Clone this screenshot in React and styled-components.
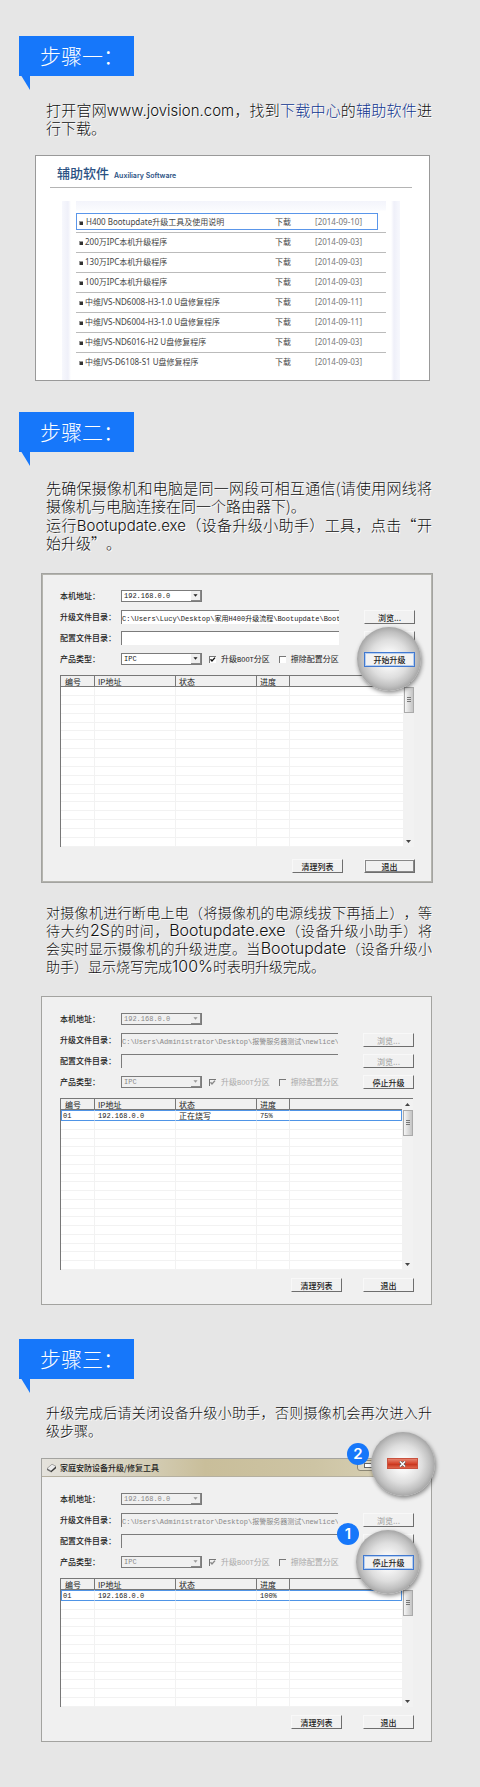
import React from "react";
import styled, { createGlobalStyle, css } from "styled-components";

const sans = `"Noto Sans CJK SC", "Noto Sans", sans-serif`;
const mono = `"Liberation Mono", "Noto Sans CJK SC", monospace`;

const Global = createGlobalStyle`
  * { box-sizing: border-box; }
  body { margin: 0; background: #e6e6e6; font-family: ${sans}; }
  button, input, select { font: inherit; color: inherit; margin: 0; padding: 0; border-radius: 0; }
`;

const Page = styled.main`
  padding: 36px 0 45px;
`;

const Step = styled.section`
  margin-bottom: ${(p) => p.$after || 0}px;
`;

const Tag = styled.h2`
  position: relative;
  width: 115px;
  height: 40px;
  margin: 0 0 24px 19px;
  padding-left: 21px;
  background: #1677fa;
  color: #fff;
  font-size: 21px;
  font-weight: 300;
  line-height: 38px;
  white-space: nowrap;
`;

const Tail = styled.svg`
  position: absolute;
  left: 0;
  top: 36px;
  width: 11px;
  height: 18px;
  fill: #1677fa;
`;

const Text = styled.div`
  margin: 0 48px ${(p) => p.$after}px 46px;
  padding-top: ${(p) => p.$before || 0}px;
  color: #111;
  font-size: ${(p) => p.$size || 15}px;
  font-weight: 300;
  line-height: 18px;
  text-align: justify;
  text-spacing-trim: space-all;
  text-shadow: 1px 1px 0 #fff;
  p { margin: 0; }
  p + p { margin-top: 1px; }
`;

const Latin = styled.span`
  font-family: Inter, sans-serif;
  font-size: ${(p) => p.$size || 15}px;
  line-height: 1;
`;

const Link = styled.a`
  color: #0f3590;
  text-decoration: none;
`;

/* ---------- download list ---------- */

const Card = styled.div`
  height: 226px;
  margin: 0 50px 0 35px;
  padding: 8px 17px 0 14px;
  background: #fff;
  border: 1px solid #999;
  display: flex;
  flex-direction: column;
`;

const CardHead = styled.header`
  display: flex;
  align-items: baseline;
  gap: 5px;
  height: 24px;
  padding-left: 7px;
  border-bottom: 1px solid #b4b4b4;
  color: #2b5183;
  h3 { margin: 0; font-size: 13px; font-weight: 500; line-height: 18px; }
  small { font: 600 7px/12px Inter, sans-serif; }
`;

const CardBody = styled.div`
  flex: 1;
  margin: 13px 12px 0;
  padding: 0 14px;
  background: linear-gradient(90deg, #f7f8fd, #eff0f9 6px, #fff 9px, #fff calc(100% - 9px), #eff0f9 calc(100% - 6px), #f7f8fd);
`;

const ListWrap = styled.div`
  position: relative;
  padding-top: 11px;
  background: linear-gradient(#f3f4fb, #fafbfe 9px, #fff 10px);
`;

const Files = styled.table`
  width: 100%;
  border-collapse: collapse;
  table-layout: fixed;
  color: #444;
  font: 8px/12px "Noto Sans", "Noto Sans CJK SC", sans-serif;
  td { height: 20px; padding: 0; border-bottom: 1px solid #bbb; white-space: nowrap; }
  tr:last-child td { border-bottom: 0; }
  td:nth-child(1) { padding-left: 3px; }
  td:nth-child(2) { width: 40px; }
  td:nth-child(3) { width: 71px; color: #777; }
`;

const Bullet = styled.i`
  display: inline-block;
  width: 4px;
  height: 4px;
  margin-right: ${(p) => (p.$wide ? 3 : 2)}px;
  background: #333;
  border-top: 1px solid #999;
  border-left: 1px solid #999;
`;

const RowFrame = styled.span`
  position: absolute;
  left: 0;
  right: 8px;
  top: 12px;
  height: 17px;
  border: 1px solid #5a96ea;
  pointer-events: none;
`;

const files = [
  ["H400 Bootupdate升级工具及使用说明", "10"],
  ["200万IPC本机升级程序", "03"],
  ["130万IPC本机升级程序", "03"],
  ["100万IPC本机升级程序", "03"],
  ["中维JVS-ND6008-H3-1.0 U盘修复程序", "11"],
  ["中维JVS-ND6004-H3-1.0 U盘修复程序", "11"],
  ["中维JVS-ND6016-H2 U盘修复程序", "03"],
  ["中维JVS-D6108-S1 U盘修复程序", "03"],
];

function Downloads() {
  return (
    <Card>
      <CardHead>
        <h3>辅助软件</h3>
        <small>Auxiliary Software</small>
      </CardHead>
      <CardBody>
        <ListWrap>
          <Files>
            <tbody>
              {files.map(([name, day], i) => (
                <tr key={name}>
                  <td><Bullet $wide={i === 0} />{name}</td>
                  <td>下载</td>
                  <td>[2014-09-{day}]</td>
                </tr>
              ))}
            </tbody>
          </Files>
          <RowFrame />
        </ListWrap>
      </CardBody>
    </Card>
  );
}

/* ---------- upgrade tool window ---------- */

const Window = styled.div`
  margin: 0 ${(p) => (p.$heavy ? 47 : 48)}px ${(p) => p.$after || 0}px 41px;
  background: #f0f0f0;
  border: 1px solid #a3a3a0;
  ${(p) => p.$heavy && css`box-shadow: inset 0 0 0 1px #b4b4ae;`}
  color: #222;
  font-size: 8px;
  line-height: 12px;
`;

const TitleBar = styled.header`
  position: relative;
  display: flex;
  align-items: center;
  gap: 3px;
  height: 18px;
  padding-left: 4px;
  background: linear-gradient(90deg, #e4e2dc, #d9d4c2 20%, #c9be9a 42%, #cdc4a4 70%, #ddd6bd);
  border-bottom: 1px solid #b5b0a0;
  font-weight: 500;
  white-space: nowrap;
`;

const Body = styled.div`
  padding: 15px 17px ${(p) => p.$bottom}px 18px;
`;

const Form = styled.form`
  display: flex;
  flex-direction: column;
  gap: 7px;
`;

const Row = styled.div`
  display: flex;
  align-items: center;
  height: 14px;
`;

const Label = styled.label`
  width: 61px;
  font-weight: 500;
  white-space: nowrap;
`;

const sunken = css`
  background: ${(p) => (p.disabled ? "#f0f0f0" : "#fff")};
  border: 0 solid #7b7b7b;
  border-width: 1px 0 0 1px;
  color: ${(p) => (p.disabled ? "#888" : "#222")};
  font-family: ${mono};
  font-size: 7px;
  opacity: 1;
`;

const Picker = styled.span`
  position: relative;
  display: block;
  width: 81px;
  height: 12px;
  select {
    ${sunken}
    appearance: none;
    display: block;
    width: 100%;
    height: 12px;
    padding-left: 2px;
    border-width: 1px;
    line-height: 10px;
    ${(p) => p.$off && css`background: #f0f0f0; color: #888;`}
  }
  svg {
    position: absolute;
    right: 1px;
    top: 1px;
    width: 10px;
    height: 10px;
    background: #efefef;
    border-right: 1px solid #888;
    border-bottom: 1px solid #888;
    fill: ${(p) => (p.$off ? "#999" : "#222")};
    pointer-events: none;
  }
`;

const PathBox = styled.input`
  ${sunken}
  flex: 1;
  min-width: 0;
  height: 14px;
  line-height: 12px;
`;

const Slot = styled.span`
  position: relative;
  flex: none;
  width: 51px;
  height: 14px;
  margin-left: ${(p) => (p.$push ? "auto" : "25px")};
`;

const Push = styled.button`
  display: block;
  width: 51px;
  height: 14px;
  background: #f1f1f1;
  border: 1px solid #f8f8f8;
  border-right-color: #6e6e6e;
  border-bottom-color: #6e6e6e;
  box-shadow: ${(p) => (p.$default ? "inset 1px 1px 0 #888, inset -1px -1px 0 #888" : "none")};
  font-weight: 500;
  line-height: 11px;
  white-space: nowrap;
  &:disabled { color: #aaa; }
  ${(p) => p.$framed && css`
    position: absolute;
    inset: 0 0 auto 0;
    z-index: 3;
    height: 15px;
    background: #f2f2f2;
    border: 1px solid #4179d0;
    box-shadow: inset 0 0 0 1px #b4cdf0;
  `}
`;

const Lens = styled.span`
  position: absolute;
  left: ${(p) => p.$left}px;
  top: ${(p) => p.$top}px;
  z-index: 2;
  width: 64px;
  height: 64px;
  border-radius: 50%;
  background: radial-gradient(closest-side, #fff 0, #f6f6f6 25%, #dedede 60%, #c0c0c0 85%, #a6a6a6 100%);
  box-shadow: 1px 2px 4px rgba(0, 0, 0, 0.45);
`;

const Badge = styled.span`
  position: absolute;
  left: ${(p) => p.$left}px;
  top: ${(p) => p.$top}px;
  z-index: 4;
  width: 22px;
  height: 22px;
  border-radius: 50%;
  background: #1677fa;
  color: #fff;
  font: 600 15px/22px Inter, sans-serif;
  text-align: center;
`;

const Check = styled.label`
  display: flex;
  align-items: center;
  gap: 5px;
  margin-left: ${(p) => p.$gap}px;
  color: ${(p) => (p.$off ? "#aaa" : "#222")};
  white-space: nowrap;
  code { font-family: ${mono}; font-size: 7px; }
`;

const CheckBox = styled.span`
  position: relative;
  display: flex;
  input {
    appearance: none;
    width: 7px;
    height: 7px;
    background: ${(p) => (p.$off ? "#f0f0f0" : "#fff")};
    border: 0 solid #777;
    border-width: 1px 0 0 1px;
  }
  svg {
    position: absolute;
    inset: 0;
    width: 7px;
    height: 7px;
    fill: none;
    stroke: ${(p) => (p.$off ? "#888" : "#111")};
    stroke-width: 1.4;
  }
`;

const ListBox = styled.div`
  display: flex;
  height: ${(p) => p.$height}px;
  margin: 9px 1px 0 0;
  background: #fff;
  border-top: 1px solid #777;
  border-left: 1px solid #777;
`;

const Grid = styled.table`
  flex: 1;
  height: 100%;
  border-collapse: separate;
  border-spacing: 0;
  table-layout: fixed;
  line-height: 8px;
  th, td { padding: 0 0 0 3px; text-align: left; white-space: nowrap; overflow: hidden; }
  th {
    height: 11px;
    background: #f0f0f0;
    border-right: 1px solid #777;
    border-bottom: 1px solid #777;
    font-weight: 400;
    line-height: 9px;
  }
  th:first-child { padding-left: 4px; }
  th:last-child { border-right: 0; }
  td { border-right: 1px solid #f2f2f2; border-bottom: 1px solid #f2f2f2; }
  td:last-child { border-right: 0; }
  td:first-child { padding-left: 1px; }
`;

const DataRow = styled.tr`
  height: 11px;
  td {
    border-top: 1px solid #4f94e6;
    border-bottom: 1px solid #4f94e6;
    font-family: ${mono};
    font-size: 7px;
  }
  td:first-child { border-left: 1px solid #4f94e6; }
  td:last-child { border-right: 1px solid #4f94e6; }
  td:nth-child(3) { font-family: ${sans}; font-size: 8px; }
`;

const Scroll = styled.div`
  display: flex;
  flex-direction: column;
  align-items: center;
  width: 11px;
  background: #f2f2f2;
  svg { width: 11px; height: 11px; fill: #444; }
`;

const Thumb = styled.span`
  width: 10px;
  height: 26px;
  margin-bottom: auto;
  padding: 9px 2px;
  background: linear-gradient(90deg, #f5f5f5, #dcdcdc 50%, #c4c4c4);
  border: 1px solid #aaa;
  &::before {
    content: "";
    display: block;
    height: 5px;
    background: repeating-linear-gradient(#777 0 1px, transparent 1px 2px);
  }
`;

const Footer = styled.div`
  display: flex;
  justify-content: flex-end;
  gap: 21px;
  margin-top: ${(p) => p.$gap}px;
`;

const CloseButton = styled.button`
  position: absolute;
  right: 13px;
  top: -1px;
  z-index: 3;
  display: flex;
  align-items: center;
  justify-content: center;
  width: 31px;
  height: 11px;
  border: 1px solid #c9523f;
  background: linear-gradient(#e5836f, #d6452c 50%, #c63119 55%, #e0664c);
  svg { width: 7px; height: 6px; }
`;

const MinButton = styled.button`
  position: absolute;
  right: 46px;
  top: 1px;
  width: 28px;
  height: 11px;
  border: 1px solid #8c8775;
  border-radius: 0 0 0 3px;
  background: #ddd8c6;
  &::before {
    content: "";
    display: block;
    width: 7px;
    height: 3px;
    margin-left: 6px;
    background: #fff;
    border: 1px solid #666;
  }
`;

const DeviceIcon = () => (
  <svg width="11" height="10" viewBox="0 0 11 10" aria-hidden="true">
    <path d="M1 5.5 6 1.2 10 3.4 5 8z" fill="#ececec" stroke="#777" strokeWidth="0.6" />
    <path d="M1 5.5 5 8v1.3L1 7z" fill="#666" />
    <path d="M5 8 10 3.4v1.8L5 9.4z" fill="#333" />
  </svg>
);

const Arrow = ({ up }) => (
  <svg viewBox="0 0 11 11" aria-hidden="true">
    <path d={up ? "M3 7h5L5.5 4z" : "M3 4h5L5.5 7z"} />
  </svg>
);

function Dropdown({ id, value, off }) {
  return (
    <Picker $off={off}>
      <select id={id} disabled={off} defaultValue={value}>
        <option>{value}</option>
      </select>
      <Arrow />
    </Picker>
  );
}

function Tick({ children, checked, off, gap }) {
  return (
    <Check $off={off} $gap={gap}>
      <CheckBox $off={off}>
        <input type="checkbox" defaultChecked={checked} disabled={off} />
        {checked && (
          <svg viewBox="0 0 7 7" aria-hidden="true"><path d="M1.5 3.2 3 5 6 1.6" /></svg>
        )}
      </CheckBox>
      <span>{children}</span>
    </Check>
  );
}

function Tool({ id, title, path, off, action, lens, data, rows, listHeight, footGap, bottom, after, heavy, order }) {
  return (
    <Window $heavy={heavy} $after={after}>
      {title && (
        <TitleBar>
          <DeviceIcon />
          {title}
          <MinButton type="button" aria-label="最小化" />
          <Lens $left={329} $top={-27} />
          <Badge $left={305} $top={-16}>2</Badge>
          <CloseButton type="button" aria-label="关闭">
            <svg viewBox="0 0 7 6" aria-hidden="true">
              <path d="M1 .5 6 5.5M6 .5 1 5.5" stroke="#555" strokeWidth="2.6" />
              <path d="M1 .5 6 5.5M6 .5 1 5.5" stroke="#fff" strokeWidth="1.5" />
            </svg>
          </CloseButton>
        </TitleBar>
      )}
      <Body $bottom={bottom}>
        <Form onSubmit={(e) => e.preventDefault()}>
          <Row>
            <Label htmlFor={`${id}-ip`}>本机地址：</Label>
            <Dropdown id={`${id}-ip`} value="192.168.0.0" off={off} />
          </Row>
          <Row>
            <Label htmlFor={`${id}-file`}>升级文件目录：</Label>
            <PathBox id={`${id}-file`} defaultValue={path} disabled={off} />
            <Slot><Push type="button" disabled={off}>浏览...</Push></Slot>
          </Row>
          <Row>
            <Label htmlFor={`${id}-conf`}>配置文件目录：</Label>
            <PathBox id={`${id}-conf`} disabled={off} />
            <Slot><Push type="button" disabled={off} aria-label="浏览">{lens ? "" : "浏览..."}</Push></Slot>
          </Row>
          <Row>
            <Label htmlFor={`${id}-type`}>产品类型：</Label>
            <Dropdown id={`${id}-type`} value="IPC" off={off} />
            <Tick checked off={off} gap={7}>升级<code>BOOT</code>分区</Tick>
            <Tick off={off} gap={9}>擦除配置分区</Tick>
            <Slot $push>
              {lens && <Lens $left={-7} $top={-25} />}
              {order && <Badge $left={-26} $top={-32}>{order}</Badge>}
              <Push type="submit" $framed={lens}>{action}</Push>
            </Slot>
          </Row>
        </Form>
        <ListBox $height={listHeight}>
          <Grid>
            <colgroup>
              <col width="34" /><col width="81" /><col width="81" /><col width="33" /><col />
            </colgroup>
            <thead>
              <tr><th>编号</th><th>IP地址</th><th>状态</th><th>进度</th><th /></tr>
            </thead>
            <tbody>
              {data && <DataRow>{data.map((d, i) => <td key={i}>{d}</td>)}<td /></DataRow>}
              {Array.from({ length: rows }, (_, i) => (
                <tr key={i}><td /><td /><td /><td /><td /></tr>
              ))}
            </tbody>
          </Grid>
          <Scroll><Arrow up /><Thumb /><Arrow /></Scroll>
        </ListBox>
        <Footer $gap={footGap}>
          <Push type="button">清理列表</Push>
          <Push type="button" $default={heavy}>退出</Push>
        </Footer>
      </Body>
    </Window>
  );
}

function StepTag({ children }) {
  return (
    <Tag>
      {children}
      <Tail viewBox="0 0 11 18" aria-hidden="true"><path d="M0 0h11v18z" /></Tail>
    </Tag>
  );
}

export default function App() {
  const adminPath = "C:\\Users\\Administrator\\Desktop\\报警服务器测试\\newlice\\";
  return (
    <>
      <Global />
      <Page>
        <Step $after={31}>
          <StepTag>步骤一：</StepTag>
          <Text $before={1} $after={18}>
            <p>
              打开官网<Latin>www.jovision.com</Latin>，找到<Link href="#download">下载中心</Link>的<Link href="#auxiliary">辅助软件</Link>进行下载。
            </p>
          </Text>
          <Downloads />
        </Step>

        <Step $after={34}>
          <StepTag>步骤二：</StepTag>
          <Text $before={3} $after={21}>
            <p>先确保摄像机和电脑是同一网段可相互通信(请使用网线将摄像机与电脑连接在同一个路由器下)。</p>
            <p>运行<Latin>Bootupdate.exe</Latin>（设备升级小助手）工具，点击“开始升级”。</p>
          </Text>
          <Tool
            id="start" heavy lens action="开始升级"
            path={"C:\\Users\\Lucy\\Desktop\\家用H400升级流程\\Bootupdate\\Boot"}
            rows={18} listHeight={172} footGap={12} bottom={9} after={20}
          />
          <Text $size={14} $after={21}>
            <p>
              对摄像机进行断电上电（将摄像机的电源线拔下再插上），等待大约<Latin $size={16}>2S</Latin>的时间，<Latin $size={16}>Bootupdate.exe</Latin>（设备升级小助手）将会实时显示摄像机的升级进度。当<Latin $size={16}>Bootupdate</Latin>（设备升级小助手）显示烧写完成<Latin $size={16}>100%</Latin>时表明升级完成。
            </p>
          </Text>
          <Tool
            id="progress" off action="停止升级" path={adminPath}
            data={["01", "192.168.0.0", "正在烧写", "75%"]}
            rows={17} listHeight={172} footGap={8} bottom={12}
          />
        </Step>

        <Step>
          <StepTag>步骤三：</StepTag>
          <Text $size={14} $after={19}>
            <p>升级完成后请关闭设备升级小助手，否则摄像机会再次进入升级步骤。</p>
          </Text>
          <Tool
            id="finish" title="家庭安防设备升级/修复工具" off lens order="1" action="停止升级" path={adminPath}
            data={["01", "192.168.0.0", "", "100%"]}
            rows={12} listHeight={129} footGap={8} bottom={12}
          />
        </Step>
      </Page>
    </>
  );
}
